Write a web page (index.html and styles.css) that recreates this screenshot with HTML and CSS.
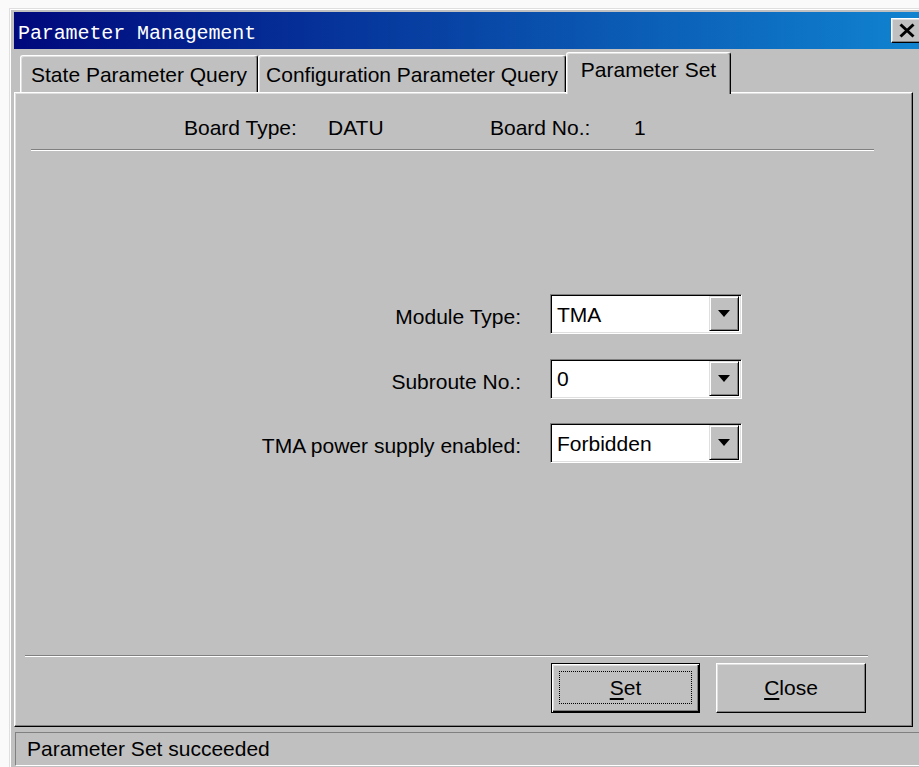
FILE: index.html
```html
<!DOCTYPE html>
<html lang="en">
<head>
<meta charset="utf-8">
<title>Parameter Management</title>
<link rel="stylesheet" href="styles.css">
</head>
<body>
<div class="window">
  <div class="titlebar">
    <span class="title">Parameter Management</span>
    <button class="close-btn" type="button" aria-label="Close">
      <svg width="18" height="15" viewBox="0 0 18 15"><path d="M2.5 1.5 L15.5 13.5 M15.5 1.5 L2.5 13.5" stroke="#000" stroke-width="3" fill="none"/></svg>
    </button>
  </div>

  <div class="tabs">
    <div class="tab tab-state">State Parameter Query</div>
    <div class="tab tab-config">Configuration Parameter Query</div>
    <div class="tab tab-set active">Parameter Set</div>
  </div>

  <div class="panel">
    <div class="board-info">
      <span>Board Type:</span>
      <span>DATU</span>
      <span>Board No.:</span>
      <span>1</span>
    </div>
    <div class="etched etched-top"></div>

    <div class="form">
      <label class="field-label">Module Type:</label>
      <div class="combo"><span class="combo-value">TMA</span><span class="combo-btn"><span class="arrow"></span></span></div>

      <label class="field-label">Subroute No.:</label>
      <div class="combo"><span class="combo-value">0</span><span class="combo-btn"><span class="arrow"></span></span></div>

      <label class="field-label">TMA power supply enabled:</label>
      <div class="combo"><span class="combo-value">Forbidden</span><span class="combo-btn"><span class="arrow"></span></span></div>
    </div>

    <div class="etched etched-bottom"></div>

    <div class="actions">
      <button class="push default" type="button"><span class="focus"><span class="mnemonic">S</span>et</span></button>
      <button class="push" type="button"><span class="focus plain"><span class="mnemonic">C</span>lose</span></button>
    </div>
  </div>

  <div class="statusbar">
    <div class="pane">Parameter Set succeeded</div>
  </div>
</div>
</body>
</html>
```

FILE: styles.css
```css
* {
  box-sizing: border-box;
}

html,
body {
  margin: 0;
  height: 100%;
}

body {
  background: #fafafa;
  overflow: hidden;
  font-family: "Liberation Sans", Arial, sans-serif;
  font-size: 21px;
  line-height: 24px;
  color: #000;
}

/* dialog frame */
.window {
  margin: 8px 0 0 9px;
  width: 921px;
  height: 780px;
  background: #c0c0c0;
  border: 1px solid;
  border-color: #dfdfdf #000 #000 #dfdfdf;
  box-shadow: inset 1px 1px #fff, inset -1px -1px #808080;
  padding: 3px 3px 0 4px;
  display: flex;
  flex-direction: column;
}

/* caption */
.titlebar {
  height: 37px;
  flex: none;
  display: flex;
  align-items: center;
  justify-content: space-between;
  padding: 0 3px 0 4px;
  background: linear-gradient(to right, #00087c, #1084d0);
}

.title {
  font-family: "Liberation Mono", "DejaVu Sans Mono", monospace;
  font-size: 20px;
  color: #fff;
  letter-spacing: -0.1px;
  margin-top: 7px;
}

.close-btn {
  width: 32px;
  height: 25px;
  padding: 0;
  margin: 0;
  display: flex;
  align-items: center;
  justify-content: center;
  background: #c0c0c0;
  border: 1px solid;
  border-color: #fff #000 #000 #fff;
  box-shadow: inset -1px -1px #808080, inset 1px 1px #dfdfdf;
}

/* tab strip */
.tabs {
  display: flex;
  align-items: flex-end;
  margin-top: 3px;
  margin-bottom: -2px;
  padding-left: 6px;
  position: relative;
  z-index: 1;
  flex: none;
}

.tab {
  height: 37px;
  margin-bottom: 2px;
  padding-top: 7px;
  display: flex;
  justify-content: center;
  align-items: flex-start;
  white-space: nowrap;
  background: #c0c0c0;
  border-top: 1px solid #fff;
  border-left: 1px solid #fff;
  border-right: 1px solid #000;
  border-radius: 3px 3px 0 0;
  box-shadow: inset -1px 0 #808080, inset 1px 1px #dfdfdf;
}

.tab-state {
  width: 238px;
}

.tab-config {
  width: 308px;
}

.tab-set {
  width: 165px;
}

.tab.active {
  height: 42px;
  margin-bottom: 0;
  padding-top: 5px;
}

/* page body */
.panel {
  width: 899px;
  height: 635px;
  flex: none;
  display: flex;
  flex-direction: column;
  border: 1px solid;
  border-color: #fff #000 #000 #fff;
  box-shadow: inset -1px -1px #808080, inset 1px 1px #dfdfdf;
}

.board-info {
  display: grid;
  grid-template-columns: 144px 162px 144px auto;
  margin: 23px 0 0 169px;
}

.etched {
  height: 2px;
  border-top: 1px solid #808080;
  border-bottom: 1px solid #fff;
  flex: none;
}

.etched-top {
  margin: 9px 0 0 16px;
  width: 843px;
}

.etched-bottom {
  margin: 192px 0 0 10px;
  width: 843px;
}

.form {
  display: grid;
  grid-template-columns: 506px 192px;
  column-gap: 29px;
  row-gap: 24.5px;
  margin-top: 143px;
}

.field-label {
  justify-self: end;
  align-self: center;
  margin-top: 6px;
  white-space: nowrap;
}

.combo {
  height: 40px;
  display: flex;
  align-items: stretch;
  padding: 1px 2px 2px 6px;
  background: #fff;
  border: 1px solid;
  border-color: #808080 #fff #fff #808080;
  box-shadow: inset 1px 1px #000, inset -1px -1px #dfdfdf;
}

.combo-value {
  flex: 1;
  display: flex;
  align-items: center;
  padding-top: 2px;
}

.combo-btn {
  width: 30px;
  display: flex;
  align-items: center;
  justify-content: center;
  background: #c0c0c0;
  border: 1px solid;
  border-color: #dfdfdf #000 #000 #dfdfdf;
  box-shadow: inset 1px 1px #fff, inset -1px -1px #808080;
}

.arrow {
  width: 0;
  height: 0;
  border-left: 6.5px solid transparent;
  border-right: 6.5px solid transparent;
  border-top: 7px solid #000;
}

/* command buttons */
.actions {
  display: flex;
  justify-content: flex-end;
  gap: 16px;
  margin: 6px 46px 0 0;
}

.push {
  height: 50px;
  width: 150px;
  margin: 0;
  padding: 7px 7px 8px 7px;
  font: inherit;
  color: #000;
  background: #c0c0c0;
  border: 1px solid;
  border-color: #fff #000 #000 #fff;
  box-shadow: inset -1px -1px #808080, inset 1px 1px #dfdfdf;
  display: flex;
}

.push.default {
  width: 149px;
  border-color: #000;
  box-shadow: inset 1px 1px #fff, inset -1px -1px #000, inset -2px -2px #808080, inset 2px 2px #dfdfdf;
}

.focus {
  flex: 1;
  display: flex;
  align-items: center;
  justify-content: center;
  border: 1px dotted #000;
}

.focus.plain {
  border-color: transparent;
}

.mnemonic {
  text-decoration: underline;
  text-underline-offset: 3px;
}

/* status line */
.statusbar {
  flex: none;
  padding: 5px 0 0 1px;
}

.pane {
  height: 34px;
  padding: 4px 0 0 11px;
  border: 1px solid;
  border-color: #808080 #fff #fff #808080;
}
```
